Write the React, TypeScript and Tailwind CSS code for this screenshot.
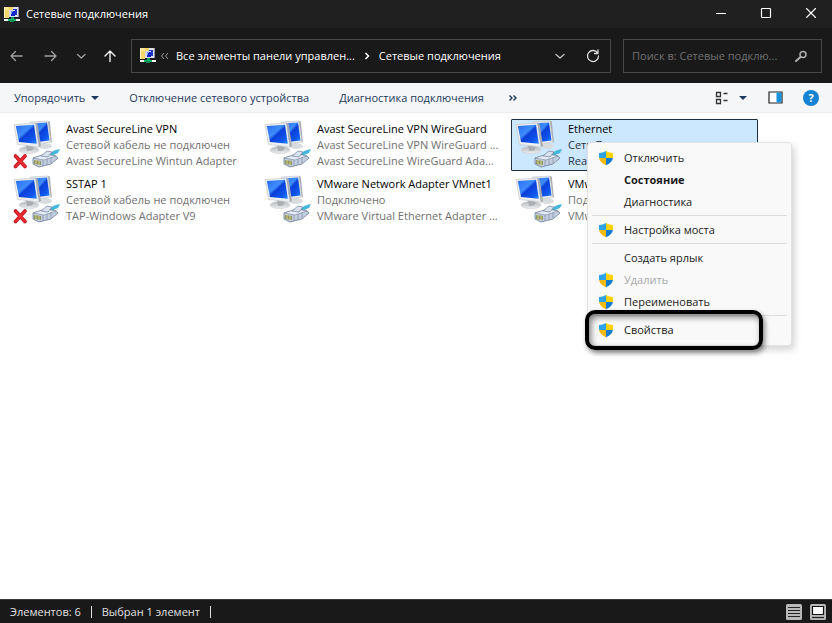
import { ReactNode } from "react";

interface Connection {
	name: string;
	status: string;
	adapter: string;
	broken?: boolean;
	selected?: boolean;
}

type MenuEntry = { type: "separator" } | { type: "item"; label: string; shield?: boolean; bold?: boolean; disabled?: boolean; framed?: boolean };

const connections: Connection[] = [
	{ name: "Avast SecureLine VPN", status: "Сетевой кабель не подключен", adapter: "Avast SecureLine Wintun Adapter", broken: true },
	{ name: "Avast SecureLine VPN WireGuard", status: "Avast SecureLine VPN WireGuard ...", adapter: "Avast SecureLine WireGuard Ada..." },
	{ name: "Ethernet", status: "Сеть 7", adapter: "Realtek", selected: true },
	{ name: "SSTAP 1", status: "Сетевой кабель не подключен", adapter: "TAP-Windows Adapter V9", broken: true },
	{ name: "VMware Network Adapter VMnet1", status: "Подключено", adapter: "VMware Virtual Ethernet Adapter ..." },
	{ name: "VMware", status: "Подклю", adapter: "VMware" },
];

const menu: MenuEntry[] = [
	{ type: "item", label: "Отключить", shield: true },
	{ type: "item", label: "Состояние", bold: true },
	{ type: "item", label: "Диагностика" },
	{ type: "separator" },
	{ type: "item", label: "Настройка моста", shield: true },
	{ type: "separator" },
	{ type: "item", label: "Создать ярлык" },
	{ type: "item", label: "Удалить", shield: true, disabled: true },
	{ type: "item", label: "Переименовать", shield: true },
	{ type: "separator" },
	{ type: "item", label: "Свойства", shield: true, framed: true },
];

function FolderNetIcon() {
	return (
		<svg viewBox="0 0 16 17" className="h-[17px] w-4 shrink-0">
			<path d="M0 1h5v11H0z" fill="#f3d76c" />
			<path d="M0 1h1v11H0z" fill="#fff6c4" />
			<path d="M1 1h3l1 1v2H1z" fill="#fbe890" />
			<path d="M5 1h9v10H5z" fill="#dfe2f2" />
			<path d="M5 1h4v3H5z" fill="#f3d76c" />
			<path d="M14 1h1v10h-1z" fill="#8c91ac" />
			<path d="M9 3h4v6H9z" fill="#2436c0" />
			<path d="M5 4h6v7H5z" fill="#d4d9f0" />
			<path d="M7 5h4v5H7z" fill="#1024c8" />
			<path d="M7 5h2v1H8v2H7z" fill="#7b97fb" />
			<path d="M7 11h3v2H7z" fill="#0c9f60" />
			<path d="M4 13h8v2H4z" fill="#12b873" />
			<path d="M0 13h4v2H0zM12 13h4v2h-4z" fill="#f3f3f3" />
			<path d="M6 14h4v2H6z" fill="#0a8a52" />
		</svg>
	);
}

function Monitors({ broken }: { broken?: boolean }) {
	return (
		<svg viewBox="0 0 48 49" className="h-[49px] w-12 shrink-0">
			<defs>
				<linearGradient id="screen" x1="0" y1="0" x2="1" y2="1">
					<stop offset="0" stopColor="#2a6cf0" />
					<stop offset="0.4" stopColor="#3f8cfb" />
					<stop offset="0.5" stopColor="#0a3fd8" />
					<stop offset="0.8" stopColor="#1158ee" />
					<stop offset="1" stopColor="#2b8cff" />
				</linearGradient>
				<linearGradient id="stand" x1="0" y1="0" x2="0" y2="1">
					<stop offset="0" stopColor="#b4b8bb" />
					<stop offset="1" stopColor="#eceef0" />
				</linearGradient>
			</defs>
			<ellipse cx="32" cy="26" rx="7" ry="3" fill="#d9dcde" />
			<path d="M17 2l18-1 3 21-15 3z" fill="#e6e9eb" stroke="#c2c6c9" strokeWidth="0.6" />
			<path d="M19 3.500l15-1 2.500 18L24 22z" fill="url(#screen)" />
			<path d="M35 1l1.800.6 2 20-.8 1.400z" fill="#a9adb0" />
			<ellipse cx="16" cy="30" rx="10" ry="3.600" fill="url(#stand)" stroke="#cccfd1" strokeWidth="0.6" />
			<path d="M13 25l8 2-2 3.500-5 .5z" fill="#aaaeb2" />
			<path d="M1 4.500L22.500 3 26 27 4.500 24.500z" fill="#edeff0" stroke="#c0c4c7" strokeWidth="0.6" />
			<path d="M2.800 6L21 4.800l2.800 19L6 22z" fill="url(#screen)" />
			<path d="M22.500 3l2 .6L28 26l-2 1z" fill="#a9adb1" />
			<path d="M36 34q4-4 11-5l-2 4q-4 1-7 4z" fill="#46b7dc" />
			<path d="M20 38l13-4 10 2 2 2-7 6-12 3-6-3z" fill="#c3cede" stroke="#6d7d98" strokeWidth="0.8" />
			<path d="M20 38l13-4 10 2-12 4z" fill="#e6edf6" stroke="#77869f" strokeWidth="0.6" />
			<path d="M28 36l6-5 5 1-4 5z" fill="#d8e1ed" stroke="#71809b" strokeWidth="0.7" />
			<path d="M30 40v6M34 39v6M38 37v6" stroke="#8594ad" strokeWidth="0.8" />
			<path d="M21 40l7 1v4l-7-1z" fill="#8f9664" />
			<path d="M23 40v4M26 41v4" stroke="#d7d17a" strokeWidth="1" />
			{broken && (
				<>
					<path d="M2.500 36l9.500 10.500M12 36l-9.500 10.500" stroke="#b80f17" strokeWidth="3.600" strokeLinecap="round" />
					<path d="M2.500 36l9.500 10.500M12 36l-9.500 10.500" stroke="#ee2b33" strokeWidth="2.200" strokeLinecap="round" />
				</>
			)}
		</svg>
	);
}

function Shield() {
	return (
		<svg viewBox="0 0 16 16" className="size-4">
			<defs>
				<clipPath id="shield-shape">
					<path d="M8 1Q5 3 1 3v4.500Q1.500 12.500 8 15.200Q14.500 12.500 15 7.500V3Q11 3 8 1z" />
				</clipPath>
			</defs>
			<g clipPath="url(#shield-shape)">
				<path d="M0 0h8v8H0z" fill="#2ba3e6" />
				<path d="M8 0h8v8H8z" fill="#ffd20a" />
				<path d="M0 8h8v8H0z" fill="#f6b90e" />
				<path d="M8 8h8v8H8z" fill="#137bd0" />
			</g>
		</svg>
	);
}

function NavButton({ label, color, children }: { label: string; color: string; children: ReactNode }) {
	return (
		<button aria-label={label} className={`grid size-4 shrink-0 place-items-center ${color}`}>
			<svg viewBox="0 0 16 16" className="size-4" fill="none" stroke="currentColor" strokeWidth="1.300" strokeLinecap="round" strokeLinejoin="round">
				{children}
			</svg>
		</button>
	);
}

function TitleBar() {
	return (
		<header className="flex h-7 items-center bg-[#202020] pl-1 pr-[13px] text-white">
			<FolderNetIcon />
			<h1 className="ml-1.5 flex-1">Сетевые подключения</h1>
			<div className="flex items-center gap-[29px]">
				<NavButton label="Свернуть" color="text-white">
					<path d="M3.500 7.500h9" strokeWidth="1" />
				</NavButton>
				<NavButton label="Развернуть" color="text-white">
					<rect x="3.500" y="2.500" width="9" height="9" rx="0.800" strokeWidth="1.200" />
				</NavButton>
				<NavButton label="Закрыть" color="text-white">
					<path d="M3.500 2.500l9 9M12.500 2.500l-9 9" strokeWidth="1.100" />
				</NavButton>
			</div>
		</header>
	);
}

function AddressBar() {
	return (
		<nav className="flex h-[55px] items-center bg-[#191919] pl-2 pr-[10px]">
			<div className="mr-[13px] flex gap-x-4">
				<NavButton label="Назад" color="text-[#a0a0a0]">
					<path d="M3 8h11M7.500 3.500L3 8l4.500 4.500" />
				</NavButton>
				<NavButton label="Вперёд" color="ml-0.5 text-[#a0a0a0]">
					<path d="M3 8h11M9.500 3.500L14 8l-4.500 4.500" />
				</NavButton>
				<NavButton label="Последние расположения" color="text-[#a0a0a0]">
					<path d="M3.500 6.500l3.800 3.500L11 6.500" />
				</NavButton>
				<NavButton label="Вверх" color="-ml-1 text-white">
					<path d="M8 13.500V3M3 8l5-5 5 5" />
				</NavButton>
			</div>
			<div className="flex h-[34px] min-w-0 flex-1 items-center border border-[#484848] pl-2 pr-[9px] text-white">
				<FolderNetIcon />
				<svg viewBox="0 0 10 8" className="ml-1 mr-1.5 h-2 w-2.5 shrink-0" fill="none" stroke="#a0a0a0" strokeWidth="1">
					<path d="M4 1L1.500 4 4 7M8 1L5.500 4 8 7" />
				</svg>
				<a href="#panel" className="truncate font-medium">
					Все элементы панели управлен...
				</a>
				<svg viewBox="0 0 6 8" className="mx-[9px] h-2 w-1.5 shrink-0" fill="none" stroke="#fff" strokeWidth="1.500">
					<path d="M1.500 1L4.500 4l-3 3" />
				</svg>
				<a href="#connections" className="flex-1 truncate font-medium">
					Сетевые подключения
				</a>
				<NavButton label="Предыдущие расположения" color="mr-[17px] text-[#c4c4c4]">
					<path d="M4 6.500L8 10l4-3.500" />
				</NavButton>
				<NavButton label="Обновить" color="text-[#dddddd]">
					<path d="M12.600 5A5.500 5.500 0 1 0 13.500 8M13 2v3.500H9.500" />
				</NavButton>
			</div>
			<label className="ml-3 flex h-[34px] w-[199px] shrink-0 items-center border border-[#484848] pl-2 pr-3">
				<input
					type="text"
					aria-label="Поиск"
					placeholder="Поиск в: Сетевые подклю..."
					className="min-w-0 flex-1 bg-transparent text-white outline-none placeholder:text-[#707070]"
				/>
				<svg viewBox="0 0 16 16" className="size-4 shrink-0" fill="none" stroke="#b0b0b0" strokeWidth="1.500" strokeLinecap="round">
					<circle cx="10" cy="6.500" r="3" />
					<path d="M7.500 9l-4.500 4" strokeWidth="2" />
				</svg>
			</label>
		</nav>
	);
}

function CommandBar() {
	return (
		<div className="flex h-[30px] items-center border-b border-[#ececec] bg-[#f5f6f8] pl-3.5 pr-[13px] text-[#1e395b]">
			<button className="flex items-center gap-1.5">
				Упорядочить
				<svg viewBox="0 0 8 4" className="h-1 w-2">
					<path d="M0 0h8L4 4z" fill="#1e395b" />
				</svg>
			</button>
			<button className="ml-[30px]">Отключение сетевого устройства</button>
			<button className="ml-[30px]">Диагностика подключения</button>
			<button aria-label="Дополнительные команды" className="ml-6">
				<svg viewBox="0 0 10 8" className="h-2 w-2.5" fill="none" stroke="#1e395b" strokeWidth="1.400">
					<path d="M1.500 1.500L4 4 1.500 6.500M5.500 1.500L8 4 5.500 6.500" />
				</svg>
			</button>
			<div className="ml-auto flex items-center">
				<button aria-label="Изменить представление" className="flex items-center gap-2.5">
					<svg viewBox="0 0 14 14" className="size-3.5" fill="none" stroke="#333" strokeWidth="1.300">
						<path d="M1.500 1.500h4v4h-4zM1.500 8.500h4v4h-4zM8.500 2.500h4M8.500 9.500h4" />
					</svg>
					<svg viewBox="0 0 8 4" className="h-1 w-2">
						<path d="M0 0h8L4 4z" fill="#1e395b" />
					</svg>
				</button>
				<button aria-label="Область просмотра" className="ml-[21px]">
					<svg viewBox="0 0 15 13" className="block h-[13px] w-[15px]">
						<path d="M1 1h13v11H1z" fill="#fff" stroke="#222" strokeWidth="1.200" />
						<path d="M8.500 1.600h5v9.800h-5z" fill="#1993df" />
					</svg>
				</button>
				<button aria-label="Справка" className="ml-5 grid size-4 place-items-center rounded-full bg-[#1583d3] font-bold text-white">
					?
				</button>
			</div>
		</div>
	);
}

function ConnectionTile({ name, status, adapter, broken, selected }: Connection) {
	return (
		<li className={`flex h-[52px] border pl-[3px] ${selected ? "rounded-[1px] border-[#203040] bg-[#cce8ff]" : "border-transparent"}`}>
			<Monitors broken={broken} />
			<div className={`min-w-0 flex-1 whitespace-nowrap pl-[5px] pt-px ${selected ? "text-[#28333c]" : "text-[#707070]"}`}>
				<p className="text-black">{name}</p>
				<p>{status}</p>
				<p>{adapter}</p>
			</div>
		</li>
	);
}

function ContextMenu() {
	return (
		<ul
			role="menu"
			className="absolute left-[587px] top-[29px] w-[205px] rounded-sm border border-[#e2e2e2] bg-[#f9f9f9] pb-1 pt-1 text-[#1a1a1a] shadow-[3px_4px_7px_rgba(0,0,0,0.16)]"
		>
			{menu.map((entry, index) =>
				entry.type === "separator" ? (
					<li key={index} role="separator" className="mx-1 mb-[3px] mt-0.5 h-px bg-[#dedede]" />
				) : (
					<li key={index} role="none" className="relative">
						<button
							role="menuitem"
							disabled={entry.disabled}
							className={`flex h-[22px] w-full items-center pl-2.5 text-left ${entry.bold ? "font-bold" : ""} ${entry.disabled ? "text-[#a8a8a8]" : ""}`}
						>
							<span className="mr-2.5 size-4">{entry.shield && <Shield />}</span>
							{entry.label}
						</button>
						{entry.framed && (
							<span className="pointer-events-none absolute -left-[3px] -top-[9px] h-10 w-[178px] rounded-[10px] border-4 border-black shadow-[2px_3px_5px_rgba(0,0,0,0.45),inset_2px_3px_6px_rgba(0,0,0,0.5)]" />
						)}
					</li>
				),
			)}
		</ul>
	);
}

function StatusBar() {
	return (
		<footer className="flex h-6 items-center border-t border-[#3a3a3a] bg-[#191919] pl-2.5 pr-1.5 text-[#e0e0e0]">
			<span>Элементов: 6</span>
			<span className="mx-2.5 h-3 w-px bg-[#e0e0e0]" />
			<span>Выбран 1 элемент</span>
			<span className="ml-2.5 h-3 w-px bg-[#e0e0e0]" />
			<div className="ml-auto flex gap-2">
				<button aria-label="Таблица">
					<svg viewBox="0 0 16 16" className="block size-4">
						<rect width="16" height="16" rx="1.500" fill="#b8b8b8" />
						<path d="M2 3.500h12M2 6.500h12M2 9.500h12M2 12.500h12" stroke="#222" strokeWidth="1.200" />
					</svg>
				</button>
				<button aria-label="Крупные значки">
					<svg viewBox="0 0 16 16" className="block size-4">
						<rect width="16" height="16" rx="1.500" fill="#b8b8b8" />
						<path d="M2.500 2.500h11v8h-11z" fill="#fff" stroke="#111" strokeWidth="1.200" />
						<path d="M2 13.500h12" stroke="#222" strokeWidth="1.200" />
					</svg>
				</button>
			</div>
		</footer>
	);
}

export default function App() {
	return (
		<div className="flex min-h-screen flex-col bg-white font-['Open_Sans','Noto_Sans',sans-serif] text-[11px] leading-4">
			<TitleBar />
			<AddressBar />
			<CommandBar />
			<main className="relative flex-1 pl-[9px] pt-1.5">
				<ul className="grid grid-cols-[repeat(auto-fill,247px)] gap-x-1 gap-y-[3px]">
					{connections.map((c) => (
						<ConnectionTile key={c.name} {...c} />
					))}
				</ul>
				<ContextMenu />
			</main>
			<StatusBar />
		</div>
	);
}
